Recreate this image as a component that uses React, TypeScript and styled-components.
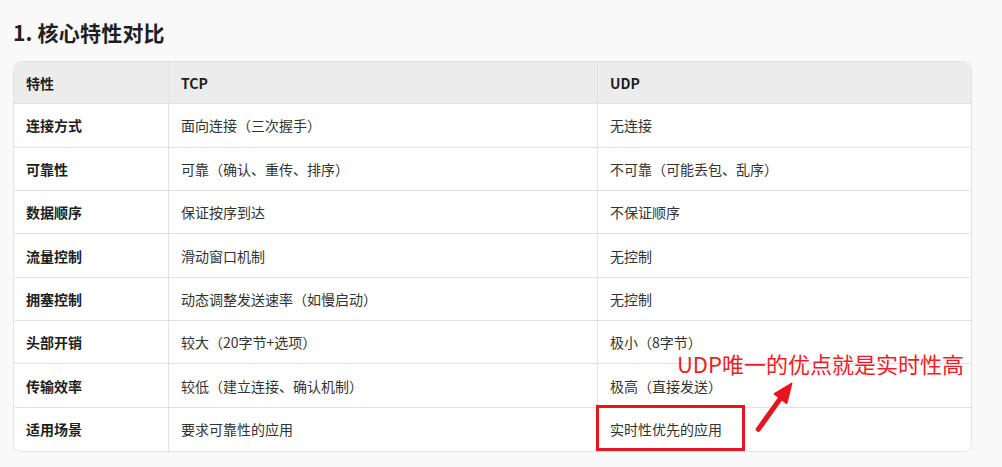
import React from "react";
import styled, { createGlobalStyle } from "styled-components";

const GlobalStyle = createGlobalStyle`
  html, body {
    margin: 0;
    padding: 0;
    background: #f9f9f9;
  }
  body {
    font-family: "Noto Sans CJK SC", "Noto Sans", sans-serif;
    color: #2b2b2b;
  }
`;

const Page = styled.div`
  width: 1002px;
  height: 467px;
  box-sizing: border-box;
  padding: 0 30px 0 13px;
  background: #f9f9f9;
`;

const Title = styled.h3`
  margin: 0;
  padding-top: 19px;
  height: 61px;
  box-sizing: border-box;
  font-size: 21px;
  line-height: 26px;
  font-weight: 700;
  color: #1f1f1f;
  letter-spacing: 0.2px;
`;

const TableWrap = styled.div`
  position: relative;
  width: 959px;
`;

const Table = styled.div`
  display: grid;
  grid-template-columns: 155px 429px 1fr;
  border: 1px solid #e2e2e2;
  border-radius: 9px;
  overflow: hidden;
  background: #ffffff;
`;

const Cell = styled.div<{ $head?: boolean; $first?: boolean; $last?: boolean; $lastRow?: boolean }>`
  height: ${(p) => (p.$head ? "42.3px" : "43.35px")};
  box-sizing: border-box;
  display: flex;
  align-items: center;
  padding: 0 12px;
  font-size: 14px;
  line-height: 20px;
  font-weight: ${(p) => (p.$head || p.$first ? 700 : 400)};
  color: ${(p) => (p.$head || p.$first ? "#1e1e1e" : "#333333")};
  background: ${(p) => (p.$head ? "#ececec" : "#ffffff")};
  border-right: ${(p) => (p.$last ? "none" : "1px solid #e2e2e2")};
  border-bottom: ${(p) => (p.$lastRow ? "none" : "1px solid #e2e2e2")};
  white-space: nowrap;
`;

const HighlightBox = styled.div`
  position: absolute;
  left: 583px;
  top: 344px;
  width: 149px;
  height: 46px;
  box-sizing: border-box;
  border: 3px solid #e8141e;
  pointer-events: none;
`;

const Note = styled.div`
  position: absolute;
  left: 664px;
  top: 287px;
  font-size: 22px;
  line-height: 30px;
  color: #ee1d27;
  white-space: nowrap;
`;

const ArrowSvg = styled.svg`
  position: absolute;
  left: 730px;
  top: 310px;
  overflow: visible;
`;

const rows: [string, string, string][] = [
  ["连接方式", "面向连接（三次握手）", "无连接"],
  ["可靠性", "可靠（确认、重传、排序）", "不可靠（可能丢包、乱序）"],
  ["数据顺序", "保证按序到达", "不保证顺序"],
  ["流量控制", "滑动窗口机制", "无控制"],
  ["拥塞控制", "动态调整发送速率（如慢启动）", "无控制"],
  ["头部开销", "较大（20字节+选项）", "极小（8字节）"],
  ["传输效率", "较低（建立连接、确认机制）", "极高（直接发送）"],
  ["适用场景", "要求可靠性的应用", "实时性优先的应用"],
];

export default function App() {
  return (
    <Page>
      <GlobalStyle />
      <Title>1. 核心特性对比</Title>
      <TableWrap>
        <Table>
          <Cell $head>特性</Cell>
          <Cell $head>TCP</Cell>
          <Cell $head $last>UDP</Cell>
          {rows.map((r, i) => {
            const lastRow = i === rows.length - 1;
            return (
              <React.Fragment key={r[0]}>
                <Cell $first $lastRow={lastRow}>{r[0]}</Cell>
                <Cell $lastRow={lastRow}>{r[1]}</Cell>
                <Cell $last $lastRow={lastRow}>{r[2]}</Cell>
              </React.Fragment>
            );
          })}
        </Table>
        <HighlightBox />
        <Note>UDP唯一的优点就是实时性高</Note>
        <ArrowSvg width="70" height="70" viewBox="0 0 70 70">
          <line x1="15.3" y1="58.3" x2="37" y2="28" stroke="#e8141e" strokeWidth="5" strokeLinecap="round" />
          <polygon points="48.7,12.3 31.3,23 43.7,32.3" fill="#e8141e" stroke="#e8141e" strokeWidth="1.5" strokeLinejoin="round" />
        </ArrowSvg>
      </TableWrap>
    </Page>
  );
}
